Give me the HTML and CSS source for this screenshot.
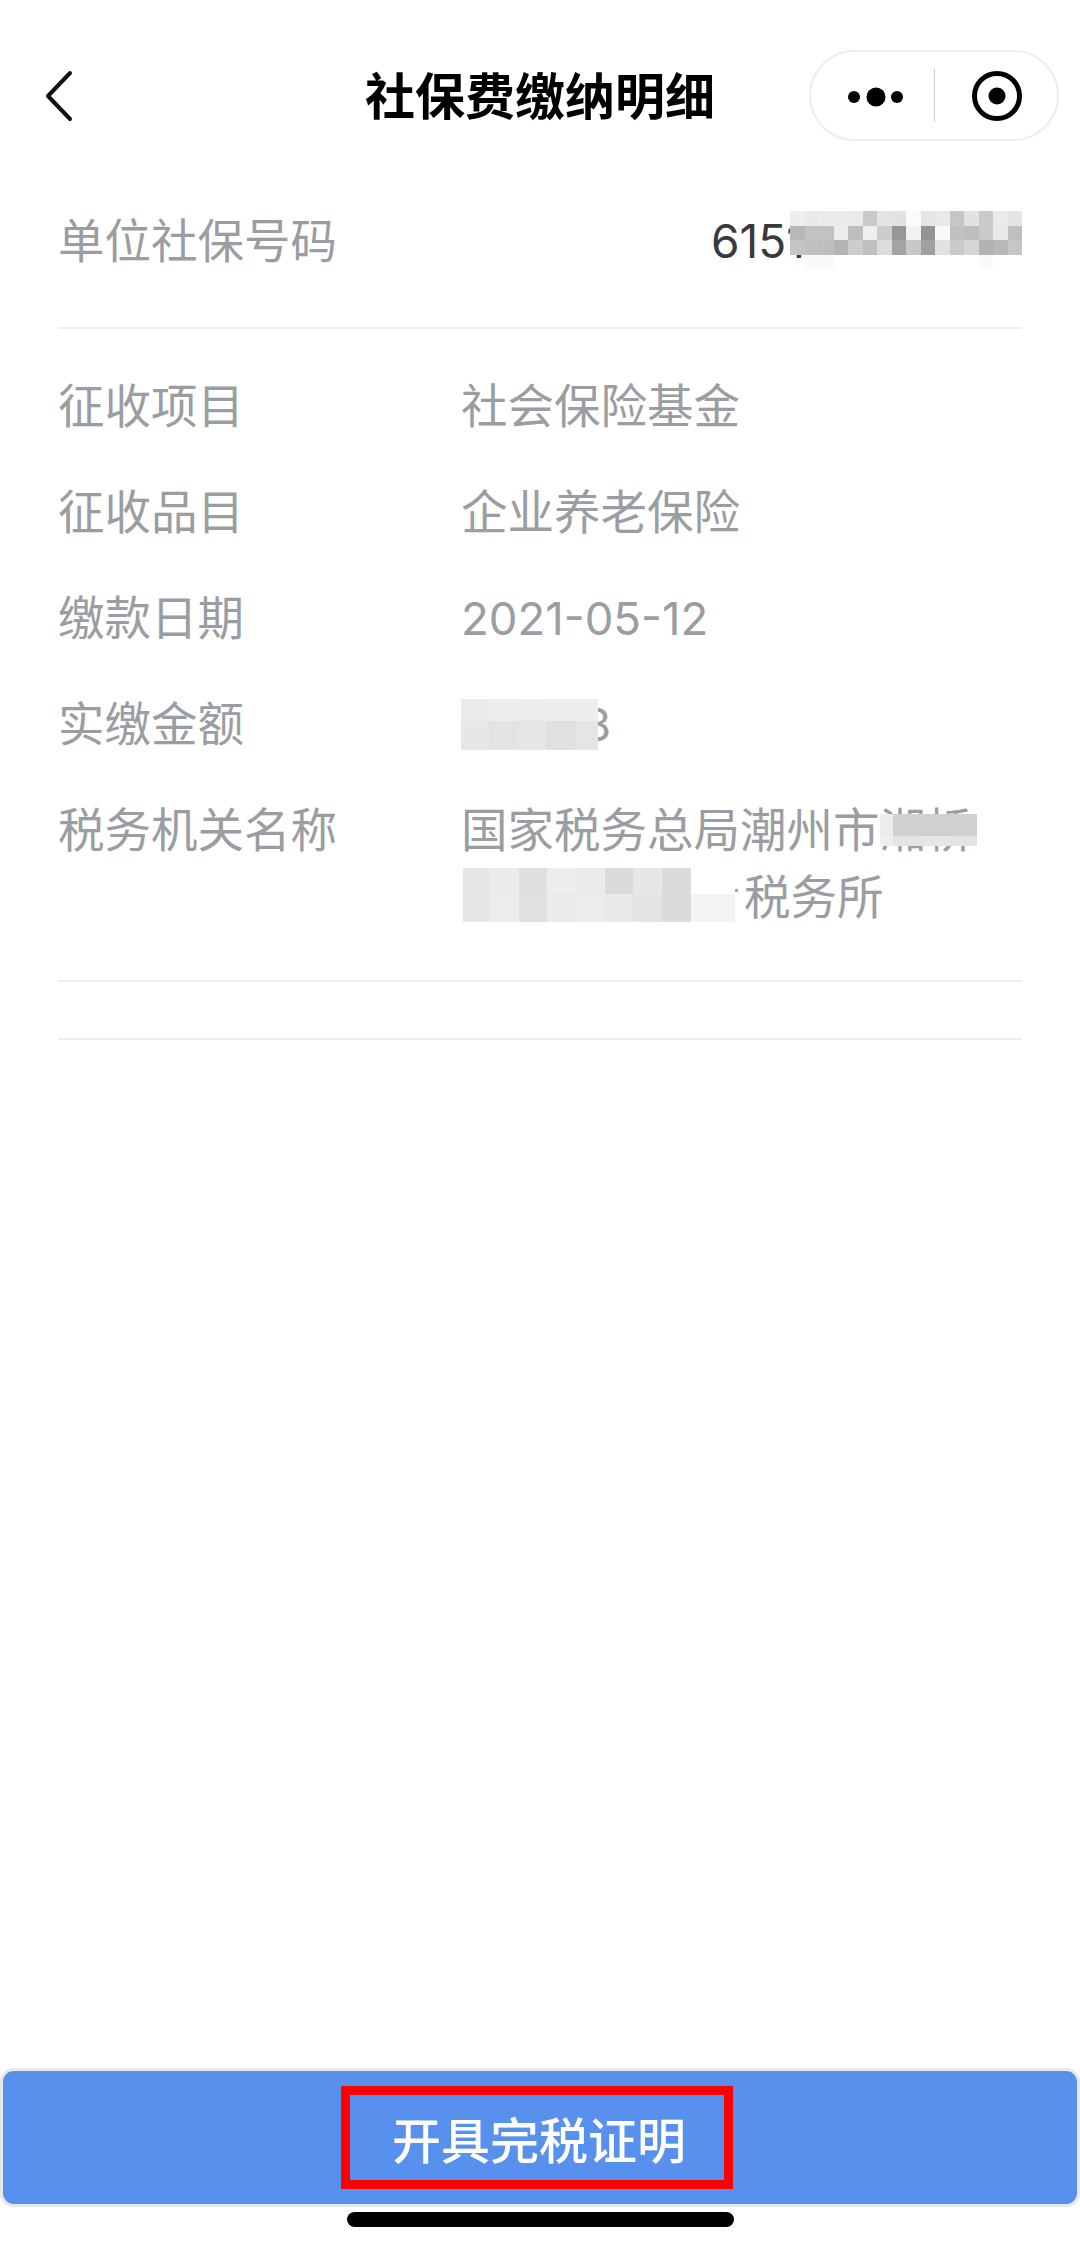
FILE: index.html
```html
<!DOCTYPE html>
<html lang="zh-CN">
<head>
    <meta charset="UTF-8">
    <meta name="viewport" content="width=device-width, initial-scale=1.0">
    <title>社保费缴纳明细</title>
    <link rel="stylesheet" href="styles.css">
</head>
<body>
    <div class="page">
        <header class="nav">
            <svg class="nav-back" width="30" height="52" viewBox="0 0 30 52">
                <path d="M25 3 L3 26 L25 49" fill="none" stroke="#111" stroke-width="4" stroke-linecap="round" stroke-linejoin="round"/>
            </svg>
            <h1 class="nav-title">社保费缴纳明细</h1>
            <div class="capsule">
                <svg width="250" height="91" viewBox="0 0 250 91">
                    <circle cx="45" cy="47" r="6" fill="#000"/>
                    <circle cx="67" cy="47" r="9.5" fill="#000"/>
                    <circle cx="88" cy="47" r="6" fill="#000"/>
                    <rect x="125" y="19" width="1" height="53" fill="#ccc"/>
                    <circle cx="188" cy="46" r="22.5" fill="none" stroke="#000" stroke-width="5"/>
                    <circle cx="188" cy="46" r="8.5" fill="#000"/>
                </svg>
            </div>
        </header>

        <section class="unit">
            <span class="label">单位社保号码</span>
            <span class="unit-no">6151
                <svg class="mosaic mosaic-no" width="232" height="58" viewBox="0 0 16 4" preserveAspectRatio="none" shape-rendering="crispEdges">
                    <g>
                        <rect x="0" y="0" width="1" height="1" fill="#eee"/><rect x="1" y="0" width="1" height="1" fill="#e9e9e9"/><rect x="2" y="0" width="1" height="1" fill="#ebebeb"/><rect x="3" y="0" width="1" height="1" fill="#ebebeb"/>
                        <rect x="4" y="0" width="1" height="1" fill="#eaeaea"/><rect x="5" y="0" width="1" height="1" fill="#c9c9c9"/><rect x="6" y="0" width="1" height="1" fill="#e4e4e4"/><rect x="7" y="0" width="1" height="1" fill="#e2e2e2"/>
                        <rect x="8" y="0" width="1" height="1" fill="#fbfbfb"/><rect x="9" y="0" width="1" height="1" fill="#e6e6e6"/><rect x="10" y="0" width="1" height="1" fill="#e9e9e9"/><rect x="11" y="0" width="1" height="1" fill="#c6c6c6"/>
                        <rect x="12" y="0" width="1" height="1" fill="#e2e2e2"/><rect x="13" y="0" width="1" height="1" fill="#cacaca"/><rect x="14" y="0" width="1" height="1" fill="#eaeaea"/><rect x="15" y="0" width="1" height="1" fill="#e4e4e4"/>
                    </g>
                    <g>
                        <rect x="0" y="1" width="1" height="1" fill="#b8b8b8"/><rect x="1" y="1" width="1" height="1" fill="#c2c2c2"/><rect x="2" y="1" width="1" height="1" fill="#c2c2c2"/><rect x="3" y="1" width="1" height="1" fill="#ececec"/>
                        <rect x="4" y="1" width="1" height="1" fill="#bebebe"/><rect x="5" y="1" width="1" height="1" fill="#efefef"/><rect x="6" y="1" width="1" height="1" fill="#cdcdcd"/><rect x="7" y="1" width="1" height="1" fill="#979797"/>
                        <rect x="8" y="1" width="1" height="1" fill="#f2f2f2"/><rect x="9" y="1" width="1" height="1" fill="#949494"/><rect x="10" y="1" width="1" height="1" fill="#f9f9f9"/><rect x="11" y="1" width="1" height="1" fill="#c1c1c1"/>
                        <rect x="12" y="1" width="1" height="1" fill="#bebebe"/><rect x="13" y="1" width="1" height="1" fill="#cacaca"/><rect x="14" y="1" width="1" height="1" fill="#e9e9e9"/><rect x="15" y="1" width="1" height="1" fill="#bfbfbf"/>
                    </g>
                    <g>
                        <rect x="0" y="2" width="1" height="1" fill="#c5c5c5"/><rect x="1" y="2" width="1" height="1" fill="#c0c0c0"/><rect x="2" y="2" width="1" height="1" fill="#bebebe"/><rect x="3" y="2" width="1" height="1" fill="#b4b4b4"/>
                        <rect x="4" y="2" width="1" height="1" fill="#cdcdcd"/><rect x="5" y="2" width="1" height="1" fill="#bfbfbf"/><rect x="6" y="2" width="1" height="1" fill="#dcdcdc"/><rect x="7" y="2" width="1" height="1" fill="#a3a3a3"/>
                        <rect x="8" y="2" width="1" height="1" fill="#c8c8c8"/><rect x="9" y="2" width="1" height="1" fill="#a0a0a0"/><rect x="10" y="2" width="1" height="1" fill="#e2e2e2"/><rect x="11" y="2" width="1" height="1" fill="#cacaca"/>
                        <rect x="12" y="2" width="1" height="1" fill="#d6d6d6"/><rect x="13" y="2" width="1" height="1" fill="#b2b2b2"/><rect x="14" y="2" width="1" height="1" fill="#b8b8b8"/><rect x="15" y="2" width="1" height="1" fill="#c6c6c6"/>
                    </g>
                    <rect x="1" y="3" width="2" height="1" fill="#fafafa"/>
                    <rect x="13" y="3" width="1" height="1" fill="#fafafa"/>
                </svg>
            </span>
        </section>

        <section class="detail">
            <div class="detail-row">
                <span class="label">征收项目</span>
                <span class="value">社会保险基金</span>
            </div>
            <div class="detail-row">
                <span class="label">征收品目</span>
                <span class="value">企业养老保险</span>
            </div>
            <div class="detail-row">
                <span class="label">缴款日期</span>
                <span class="value value-num">2021-05-12</span>
            </div>
            <div class="detail-row">
                <span class="label">实缴金额</span>
                <span class="value value-num value-amount">8
                    <svg class="mosaic mosaic-amount" width="137" height="51" viewBox="0 0 137 51" shape-rendering="crispEdges">
                        <rect x="0" y="0" width="28" height="22" fill="#eaebec"/><rect x="28" y="0" width="29" height="22" fill="#eeeeef"/><rect x="57" y="0" width="28" height="22" fill="#ebecee"/><rect x="85" y="0" width="29" height="22" fill="#ecedef"/><rect x="114" y="0" width="23" height="22" fill="#eeeeef"/>
                        <rect x="0" y="22" width="28" height="29" fill="#e6e7e9"/><rect x="28" y="22" width="29" height="29" fill="#e2e3e5"/><rect x="57" y="22" width="28" height="29" fill="#e5e6e8"/><rect x="85" y="22" width="29" height="29" fill="#dfe0e2"/><rect x="114" y="22" width="23" height="29" fill="#e4e5e7"/>
                    </svg>
                </span>
            </div>
            <div class="detail-row">
                <span class="label">税务机关名称</span>
                <div class="value">
                    <div class="value-line">国家税务总局潮州市湘桥
                        <svg class="mosaic mosaic-office" width="97" height="32" viewBox="0 0 97 32" shape-rendering="crispEdges">
                            <rect x="0" y="0" width="13" height="22" fill="#ececec"/><rect x="13" y="0" width="28" height="22" fill="#d0d1d3"/><rect x="41" y="0" width="29" height="22" fill="#cfd0d2"/><rect x="70" y="0" width="27" height="22" fill="#d0d1d3"/>
                            <rect x="0" y="22" width="13" height="10" fill="#efefef"/><rect x="13" y="22" width="28" height="10" fill="#e4e4e6"/><rect x="41" y="22" width="29" height="10" fill="#e6e6e8"/><rect x="70" y="22" width="27" height="10" fill="#e3e3e5"/>
                        </svg>
                    </div>
                    <div class="value-line value-branch">税务所
                        <svg class="mosaic mosaic-branch" width="276" height="54" viewBox="0 0 276 54" shape-rendering="crispEdges">
                            <rect x="0" y="0" width="27" height="26" fill="#e6e6e8"/><rect x="27" y="0" width="29" height="26" fill="#ebebed"/><rect x="56" y="0" width="28" height="26" fill="#dedfe1"/><rect x="84" y="0" width="29" height="26" fill="#ecedef"/><rect x="113" y="0" width="29" height="26" fill="#ebebed"/><rect x="142" y="0" width="28" height="26" fill="#d9dadc"/><rect x="170" y="0" width="29" height="26" fill="#e6e7e9"/><rect x="199" y="0" width="29" height="26" fill="#dadbdd"/>
                            <rect x="0" y="26" width="27" height="28" fill="#e6e6e8"/><rect x="27" y="26" width="29" height="28" fill="#ecedee"/><rect x="56" y="26" width="28" height="28" fill="#dfe0e2"/><rect x="84" y="26" width="29" height="28" fill="#ebebed"/><rect x="113" y="26" width="29" height="28" fill="#ecedee"/><rect x="142" y="26" width="28" height="28" fill="#e9e9eb"/><rect x="170" y="26" width="29" height="28" fill="#e3e4e6"/><rect x="199" y="26" width="29" height="28" fill="#dadbdd"/>
                            <rect x="228" y="26" width="29" height="28" fill="#f5f5f5"/><rect x="257" y="26" width="15" height="28" fill="#f3f4f4"/>
                            <rect x="272" y="21" width="3" height="3" fill="#a5a7ab"/>
                        </svg>
                    </div>
                </div>
            </div>
        </section>

        <div class="empty-row"></div>

        <footer class="footer">
            <button type="button" class="submit">
                <span class="submit-mark">开具完税证明</span>
            </button>
            <div class="home-bar"></div>
        </footer>
    </div>
</body>
</html>
```

FILE: styles.css
```css
* {
    box-sizing: border-box;
}

body {
    margin: 0;
    background-color: #fff;
    font-family: Inter, 'Noto Sans CJK SC', sans-serif;
}

.page {
    display: flex;
    flex-direction: column;
    width: 1080px;
    height: 2249px;
}

.nav {
    display: grid;
    grid-template-columns: 1fr auto 1fr;
    align-items: center;
    height: 91px;
    margin-top: 50px;
    padding: 0 21px;
}

.nav-back {
    display: block;
    margin-left: 24px;
}

.nav-title {
    margin: 2px 0 -2px;
    font-size: 50px;
    font-weight: 700;
    line-height: 91px;
    color: #000;
}

.capsule {
    justify-self: end;
    width: 250px;
    height: 91px;
    border: 2px solid #eee;
    border-radius: 46px;
    overflow: hidden;
}

.capsule svg {
    display: block;
    margin: -2px;
}

.label {
    font-size: 46.5px;
    line-height: 67px;
    color: #9a9da1;
}

.unit {
    display: flex;
    justify-content: space-between;
    margin: 67px 58px 0;
    padding-bottom: 52px;
    border-bottom: 2px solid #eeeeee;
}

.unit-no {
    position: relative;
    width: 311px;
    font-size: 46px;
    line-height: 67px;
    color: #3a3a3a;
}

.mosaic {
    position: absolute;
    display: block;
}

.mosaic-no {
    left: 79px;
    top: 3px;
}

.detail {
    display: flex;
    flex-direction: column;
    gap: 39px;
    margin: 44px 58px 0;
    padding-bottom: 49px;
    border-bottom: 2px solid #eeeeee;
}

.detail-row {
    display: grid;
    grid-template-columns: 403px 1fr;
}

.value {
    position: relative;
    font-size: 46.5px;
    line-height: 67px;
    color: #9a9da1;
}

.value-num {
    font-size: 45.5px;
}

.value-amount {
    padding-left: 122px;
}

.mosaic-amount {
    left: 0;
    top: 8px;
}

.value-line {
    position: relative;
    white-space: nowrap;
}

.value-branch {
    padding-left: 283px;
}

.mosaic-office {
    left: 419px;
    top: 17px;
}

.mosaic-branch {
    left: 2px;
    top: 4px;
}

.empty-row {
    height: 58px;
    margin: 0 58px;
    border-bottom: 2px solid #eeeeee;
}

.footer {
    display: flex;
    flex-direction: column;
    align-items: center;
    margin-top: auto;
    padding-bottom: 22px;
}

.submit {
    display: flex;
    justify-content: center;
    align-items: center;
    width: 1080px;
    height: 139px;
    padding: 0;
    border: 3px solid #e8e8e8;
    border-radius: 14px;
    background-color: #5890ee;
    font-family: inherit;
    cursor: pointer;
}

.submit-mark {
    display: flex;
    justify-content: center;
    align-items: center;
    width: 392px;
    height: 103px;
    margin-right: 6px;
    padding-left: 4px;
    border: 9px solid #ff0000;
    font-size: 49px;
    font-weight: 500;
    color: #fff;
}

.home-bar {
    width: 387px;
    height: 15px;
    margin-top: 5px;
    border-radius: 8px;
    background-color: #000;
}
```
